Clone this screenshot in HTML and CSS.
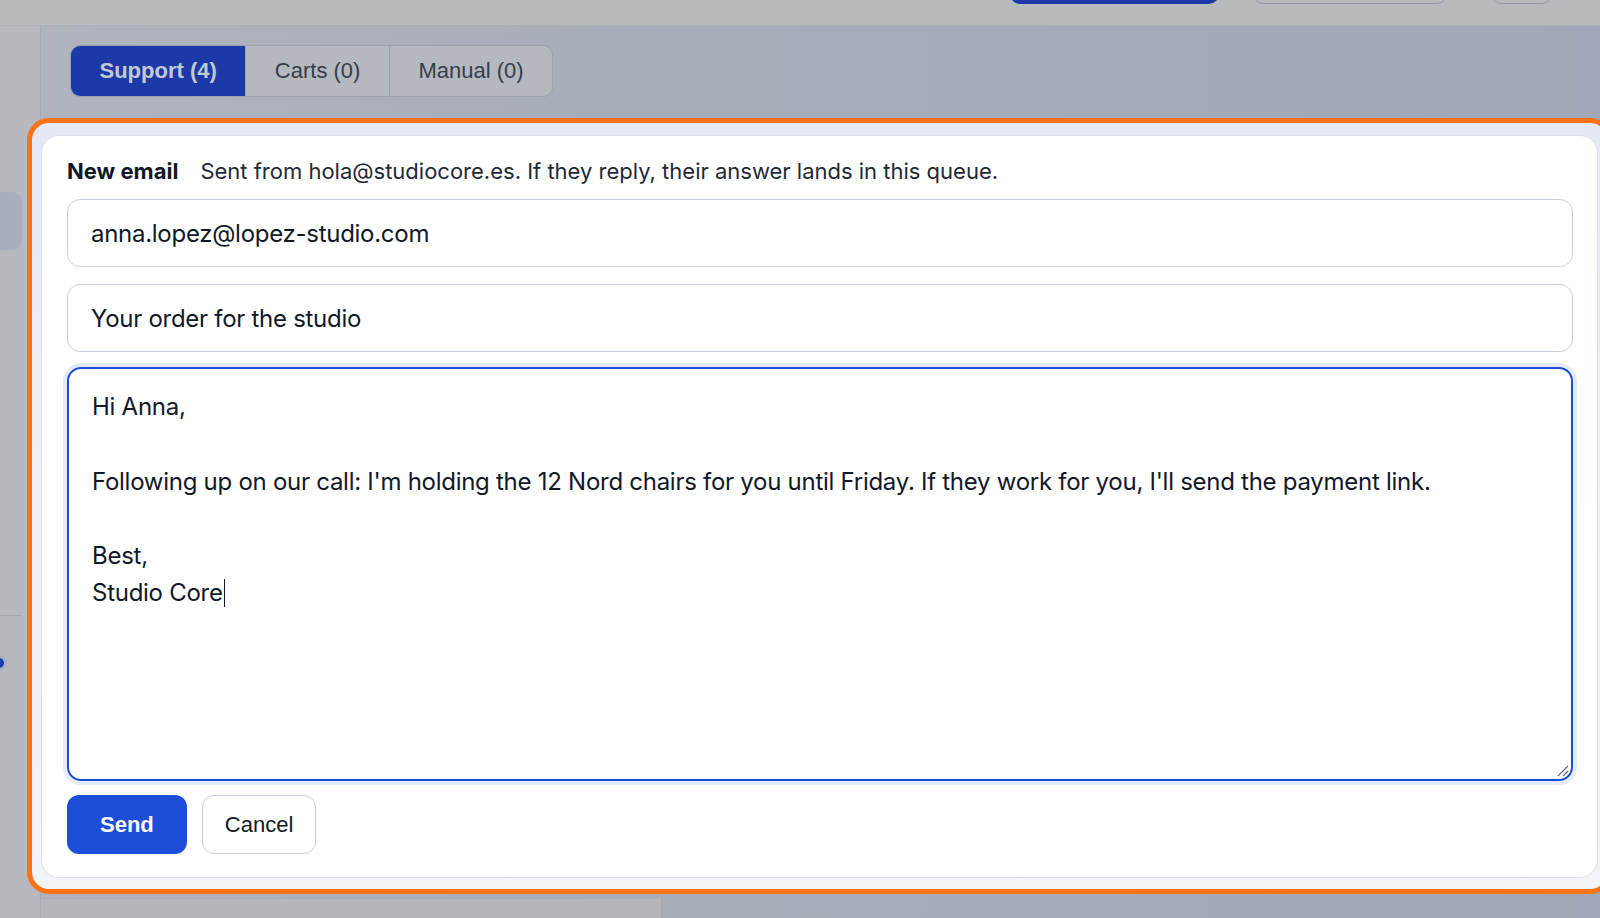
FILE: index.html
```html
<!DOCTYPE html>
<html lang="en">
<head>
    <meta charset="UTF-8">
    <meta name="viewport" content="width=device-width, initial-scale=1.0">
    <title>Inbox - New email</title>
    <link rel="stylesheet" href="styles.css">
</head>
<body>
<header class="topbar">
    <span class="top-btn primary"></span>
    <span class="top-btn outline wide"></span>
    <span class="top-btn outline small"></span>
</header>
<div class="layout">
    <aside class="sidebar">
        <div class="nav-item active"></div>
        <div class="nav-divider"></div>
        <div class="nav-dot"></div>
    </aside>
    <main class="main">
        <div class="tabs">
            <button class="tab active" type="button">Support (4)</button>
            <button class="tab" type="button">Carts (0)</button>
            <button class="tab" type="button">Manual (0)</button>
        </div>
        <section class="spotlight">
            <form class="compose" action="#" method="post">
                <p class="compose-head">
                    <strong>New email</strong>
                    <span>Sent from hola@studiocore.es. If they reply, their answer lands in this queue.</span>
                </p>
                <div class="field">anna.lopez@lopez-studio.com</div>
                <div class="field">Your order for the studio</div>
                <div class="message">Hi Anna,

Following up on our call: I'm holding the 12 Nord chairs for you until Friday. If they work for you, I'll send the payment link.

Best,
Studio Core<span class="caret"></span><svg class="grip" width="14" height="14" viewBox="0 0 14 14"><path d="M13 3 L3 13 M13 8 L8 13" stroke="#6b6f78" stroke-width="1.3" fill="none"/></svg></div>
                <div class="actions">
                    <button class="btn btn-primary" type="submit">Send</button>
                    <button class="btn btn-ghost" type="button">Cancel</button>
                </div>
            </form>
        </section>
        <div class="list-panel"></div>
    </main>
</div>
</body>
</html>
```
FILE: styles.css
```css
html, body {
    margin: 0;
    padding: 0;
}
body {
    width: 1600px;
    height: 918px;
    overflow: hidden;
    font-family: Inter, "Noto Sans", sans-serif;
    background-color: #b9babe;
}

/* top bar, buttons are cut off at the top edge */
.topbar {
    height: 25px;
    border-bottom: 1px solid #abafb8;
    background-color: #b9babe;
    display: flex;
    align-items: flex-start;
    justify-content: flex-end;
    padding-right: 48px;
}
.top-btn {
    display: block;
    height: 40px;
    margin-top: -36px;
    border-radius: 10px;
    box-sizing: border-box;
}
.top-btn.primary {
    width: 209px;
    background-color: #1b3aa8;
}
.top-btn.outline {
    border: 1px solid #8f97a8;
}
.top-btn.wide {
    width: 194px;
    margin-left: 34px;
}
.top-btn.small {
    width: 61px;
    margin-left: 44px;
}

.layout {
    display: flex;
    height: 892px;
}

.sidebar {
    width: 40px;
    flex-shrink: 0;
    border-right: 1px solid #a6aab4;
    background-color: #b8b9be;
    padding-top: 166px;
}
.nav-item {
    width: 22px;
    height: 58px;
    border-radius: 0 10px 10px 0;
    background-color: #a9aebd;
}
.nav-divider {
    width: 22px;
    height: 1px;
    margin-top: 365px;
    background-color: #a3a7b0;
}
.nav-dot {
    width: 10px;
    height: 10px;
    margin: 42px 0 0 -6px;
    border-radius: 50%;
    background-color: #1d3fa8;
    box-shadow: 0 0 0 3px #aab1c4;
}

.main {
    flex: 1;
    min-width: 0;
    background: linear-gradient(90deg, #b1b4bd 0%, #a8adba 35%, #a2a8b7 100%);
}

/* queue tabs */
.tabs {
    display: flex;
    width: max-content;
    margin: 19px 0 0 29px;
    border: 1px solid #9aa1b1;
    border-radius: 10px;
    overflow: hidden;
}
.tab {
    height: 50px;
    padding: 0 28.5px;
    border: none;
    border-left: 1px solid #9aa1b1;
    background-color: #b6b8bf;
    color: #363d4b;
    font-family: "Liberation Sans", Arial, sans-serif;
    font-size: 22px;
}
.tab:first-child {
    border-left: none;
}
.tab.active {
    background-color: #1b3aa8;
    color: #c3c8d5;
    font-weight: bold;
}

/* highlighted compose card */
.spotlight {
    margin: 21px -12px 0 -14px;
    padding: 12px 9px 11px 9px;
    border: 5px solid #f97316;
    border-radius: 22px;
    background: linear-gradient(180deg, #e5e9f5 0%, #eef0f7 40%, #f3f4f8 100%);
}
.compose {
    padding: 19px 24px 23px 25px;
    border: 1px solid #dde1ea;
    border-radius: 18px;
    background-color: #fff;
}
.compose-head {
    margin: 0 0 12px;
    height: 32px;
    display: flex;
    align-items: center;
    gap: 22px;
    font-size: 22px;
    color: #1f2937;
}
.compose-head strong {
    color: #111827;
    font-weight: 700;
}

.field {
    height: 68px;
    box-sizing: border-box;
    display: flex;
    align-items: center;
    padding: 0 23px;
    border: 1.5px solid #cbd3e0;
    border-radius: 13px;
    font-size: 24px;
    letter-spacing: -0.28px;
    color: #111827;
    margin-bottom: 17px;
}
.field + .field {
    margin-bottom: 15px;
}

.message {
    position: relative;
    height: 414px;
    box-sizing: border-box;
    padding: 19px 23px 15px;
    border: 2px solid #1d4ed8;
    border-radius: 14px;
    box-shadow: 0 0 0 4px #e4ebfc;
    font-size: 24px;
    line-height: 37.3px;
    letter-spacing: -0.27px;
    color: #111827;
    white-space: pre-wrap;
}
.caret {
    display: inline-block;
    width: 1.5px;
    height: 28px;
    margin-left: 1px;
    vertical-align: -6px;
    background-color: #111827;
}
.grip {
    position: absolute;
    right: 2px;
    bottom: 2px;
}

.actions {
    display: flex;
    gap: 15px;
    margin-top: 14px;
}
.btn {
    height: 59px;
    border-radius: 12px;
    font-family: "Liberation Sans", Arial, sans-serif;
    font-size: 22px;
    cursor: pointer;
}
.btn-primary {
    padding: 0 33px;
    border: none;
    background-color: #1d4ed8;
    color: #fff;
    font-weight: bold;
}
.btn-ghost {
    padding: 0 22px;
    border: 1.5px solid #c8d0de;
    background-color: #fff;
    color: #111827;
}

.list-panel {
    width: 620px;
    height: 40px;
    margin-top: 4px;
    border-top: 1px solid #a9adb6;
    border-right: 1px solid #a3a7b1;
    background-color: #b4b6bc;
}
```
